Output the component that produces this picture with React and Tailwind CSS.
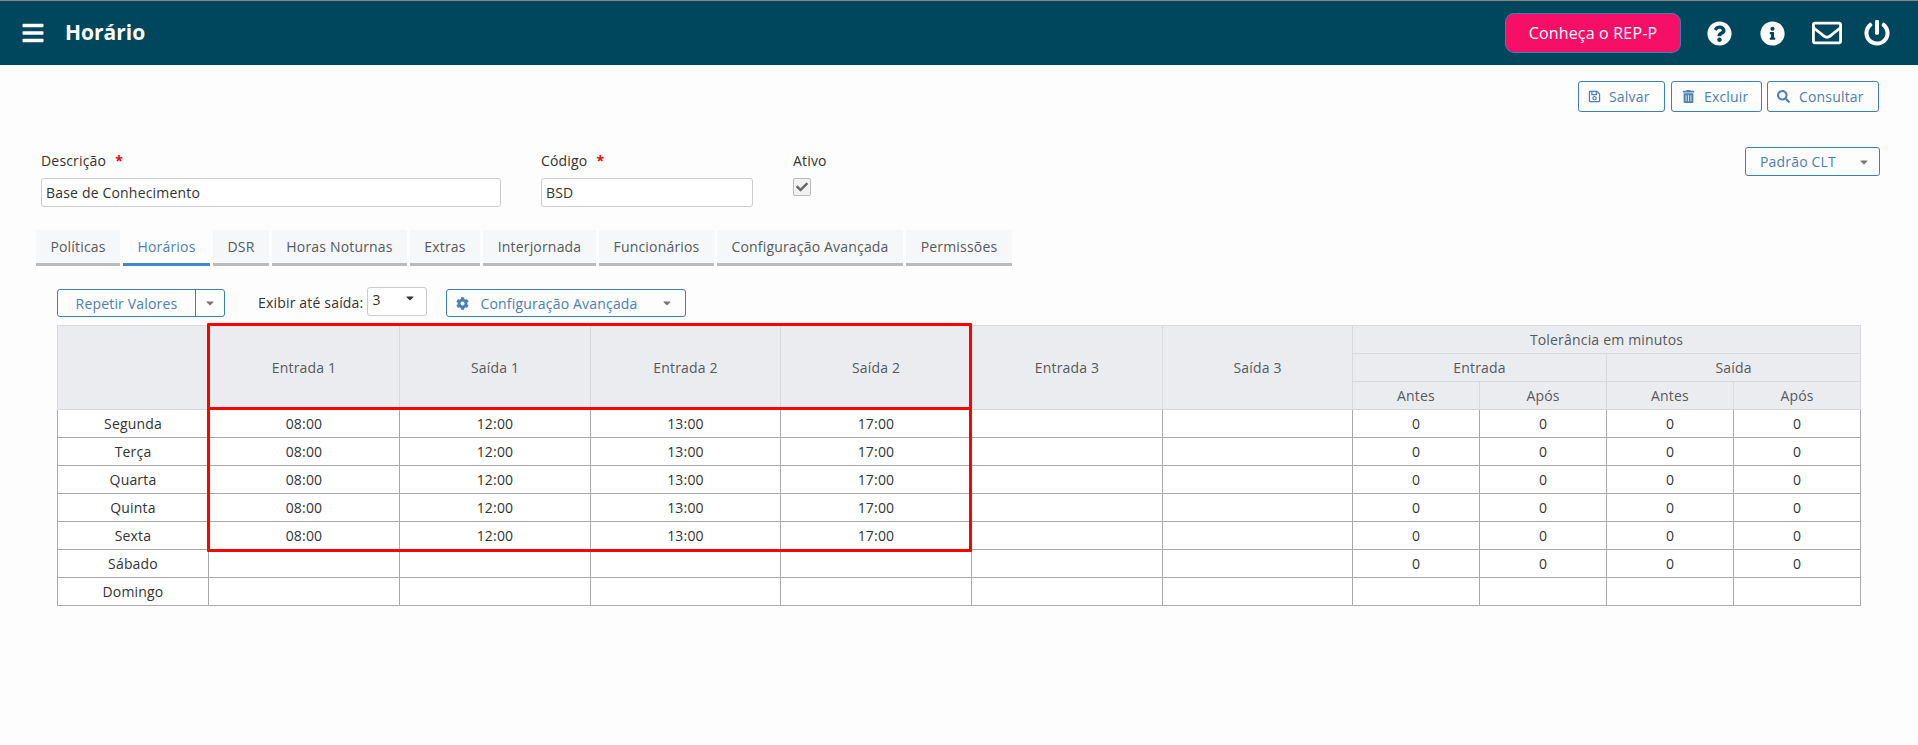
import React from "react";
import { FaBars, FaQuestionCircle, FaInfoCircle, FaRegEnvelope, FaPowerOff, FaRegSave, FaTrashAlt, FaSearch, FaCheck, FaCog, FaCaretDown } from "react-icons/fa";

const tabs = [
  ["Políticas", "w-[84px]"],
  ["Horários", "w-[87px]"],
  ["DSR", "w-[56px]"],
  ["Horas Noturnas", "w-[135px]"],
  ["Extras", "w-[70px]"],
  ["Interjornada", "w-[113px]"],
  ["Funcionários", "w-[115px]"],
  ["Configuração Avançada", "w-[186px]"],
  ["Permissões", "w-[106px]"],
];

const days = [
  ["Segunda", true, true],
  ["Terça", true, true],
  ["Quarta", true, true],
  ["Quinta", true, true],
  ["Sexta", true, true],
  ["Sábado", false, true],
  ["Domingo", false, false],
];

const th = "border border-[#d8d9dc] bg-[#ebecef] font-normal text-[#555a60] p-0";
const td = "border border-[#aaaaaa] p-0 text-center text-[#333333] h-[28px]";

function Caret({ className = "" }) {
  return <FaCaretDown className={`text-[#777777] text-[12px] ${className}`} />;
}

export default function App() {
  return (
    <div className="min-h-[745px] bg-[#fdfdfd] text-[14px] tracking-[0.18px] text-[#333333] font-['Open_Sans',sans-serif] relative">
      <header className="h-[65px] bg-[#00465c] border-t border-[#8a8480] flex items-center pl-[21px] pr-[28px] text-white">
        <FaBars className="text-[24px]" />
        <h1 className="ml-[20px] text-[21px] font-bold tracking-normal">Horário</h1>
        <button className="ml-auto w-[176px] h-[40px] rounded-[9px] bg-[#f50f67] border border-[#3d7fb8] text-[16px] text-white">Conheça o REP-P</button>
        <div className="flex items-center ml-[26px]">
          <FaQuestionCircle className="text-[25px]" />
          <FaInfoCircle className="text-[25px] ml-[28px]" />
          <FaRegEnvelope className="text-[30px] ml-[27px]" />
          <FaPowerOff className="text-[26px] ml-[22px]" />
        </div>
      </header>

      <div className="flex justify-end pr-[39px] pt-[16px]">
        <button className="w-[87px] h-[31px] border border-[#3d7fb8] rounded-[3px] text-[#4a80b5] flex items-center pl-[9px] gap-[8px]"><FaRegSave className="text-[13px]" />Salvar</button>
        <button className="ml-[6px] w-[91px] h-[31px] border border-[#3d7fb8] rounded-[3px] text-[#4a80b5] flex items-center pl-[10px] gap-[9px]"><FaTrashAlt className="text-[13px]" />Excluir</button>
        <button className="ml-[5px] w-[112px] h-[31px] border border-[#3d7fb8] rounded-[3px] text-[#4a80b5] flex items-center pl-[9px] gap-[9px]"><FaSearch className="text-[13px]" />Consultar</button>
      </div>

      <div className="flex pl-[41px] pr-[38px] mt-[34px]">
        <div className="w-[460px]">
          <label className="block h-[21px] leading-[21px] mt-[4px]">Descrição<span className="text-[#ff0000] font-bold ml-[9px]">*</span></label>
          <input readOnly value="Base de Conhecimento" className="block w-full h-[29px] mt-[7px] px-[4px] bg-white border border-[#cccccc] rounded-[3px] outline-none" />
        </div>
        <div className="w-[212px] ml-[40px]">
          <label className="block h-[21px] leading-[21px] mt-[4px]">Código<span className="text-[#ff0000] font-bold ml-[9px]">*</span></label>
          <input readOnly value="BSD" className="block w-full h-[29px] mt-[7px] px-[4px] bg-white border border-[#cccccc] rounded-[3px] outline-none" />
        </div>
        <div className="ml-[40px]">
          <label className="block h-[21px] leading-[21px] mt-[4px]">Ativo</label>
          <div className="w-[18px] h-[18px] mt-[7px] border border-[#bbbbbb] rounded-[2px] bg-[#f2f2f2] flex items-center justify-center text-[#666666]"><FaCheck className="text-[12px]" /></div>
        </div>
        <button className="ml-auto mt-[1px] w-[135px] h-[29px] border border-[#3d7fb8] rounded-[3px] text-[#4a80b5] flex items-center justify-between pl-[14px] pr-[9px]">Padrão CLT<Caret /></button>
      </div>

      <nav className="flex gap-[3px] pl-[36px] mt-[23px]">
        {tabs.map(([t, w]) => (
          <div key={t} className={`${w} h-[36px] pb-[1px] bg-[#f6f7f8] flex items-center justify-center border-b-[3px] ${t === "Horários" ? "border-[#428bca] text-[#4a80b5] bg-[#fdfdfd]" : "border-[#bbbbbb] text-[#555a60]"}`}>{t}</div>
        ))}
      </nav>

      <div className="flex items-start pl-[57px] mt-[21px]">
        <div className="mt-[2px] w-[168px] h-[28px] border border-[#3d7fb8] rounded-[3px] text-[#4a80b5] flex">
          <div className="w-[138px] border-r border-[#3d7fb8] flex items-center justify-center">Repetir Valores</div>
          <div className="flex-1 flex items-center justify-center"><Caret /></div>
        </div>
        <span className="ml-[33px] mt-[5px] text-[#333333]">Exibir até saída:</span>
        <div className="ml-[4px] w-[60px] h-[29px] border border-[#cccccc] rounded-[3px] bg-white flex justify-between pl-[4px] pr-[10px] pt-[1px]">3<FaCaretDown className="text-[#333333] text-[12px] mt-[3px]" /></div>
        <div className="mt-[2px] ml-[19px] w-[240px] h-[28px] border border-[#3d7fb8] rounded-[3px] text-[#4a80b5] flex items-center pl-[9px] pr-[12px]">
          <FaCog className="text-[13px]" /><span className="ml-[11px]">Configuração Avançada</span><Caret className="ml-auto" />
        </div>
      </div>

      <div className="relative mx-[57px] mt-[8px] w-[1803px]">
        <table className="w-full table-fixed border-collapse">
          <colgroup>
            <col className="w-[151px]" />
            <col className="w-[191px]" /><col className="w-[191px]" /><col className="w-[190px]" />
            <col className="w-[191px]" /><col className="w-[191px]" /><col className="w-[190px]" />
            <col className="w-[127px]" /><col className="w-[127px]" /><col className="w-[127px]" /><col className="w-[127px]" />
          </colgroup>
          <thead>
            <tr className="h-[28px]">
              <th rowSpan={3} className={th}></th>
              {["Entrada 1", "Saída 1", "Entrada 2", "Saída 2", "Entrada 3", "Saída 3"].map((h) => (
                <th key={h} rowSpan={3} className={th}>{h}</th>
              ))}
              <th colSpan={4} className={th}>Tolerância em minutos</th>
            </tr>
            <tr className="h-[28px]">
              <th colSpan={2} className={th}>Entrada</th>
              <th colSpan={2} className={th}>Saída</th>
            </tr>
            <tr className="h-[28px]">
              <th className={th}>Antes</th><th className={th}>Após</th><th className={th}>Antes</th><th className={th}>Após</th>
            </tr>
          </thead>
          <tbody className="bg-white">
            {days.map(([d, hours, tol]) => (
              <tr key={d}>
                <td className={td}>{d}</td>
                {["08:00", "12:00", "13:00", "17:00"].map((v) => (
                  <td key={v} className={td}>{hours ? v : ""}</td>
                ))}
                <td className={td}></td>
                <td className={td}></td>
                {[0, 1, 2, 3].map((i) => (
                  <td key={i} className={td}>{tol ? "0" : ""}</td>
                ))}
              </tr>
            ))}
          </tbody>
        </table>
        <div className="absolute left-[150px] top-[-2px] w-[765px] h-[229px] border-[3px] border-[#ff0000] rounded-[1px] pointer-events-none">
          <div className="h-[84px] border-b-[3px] border-[#ff0000]"></div>
        </div>
      </div>
    </div>
  );
}
